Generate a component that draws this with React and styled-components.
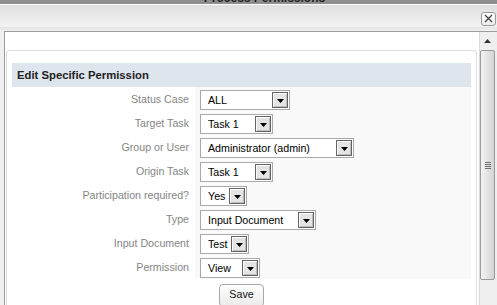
import React from 'react';
import styled, { createGlobalStyle } from 'styled-components';

const GlobalStyle = createGlobalStyle`
  html, body {
    margin: 0;
    padding: 0;
    background: #f0f0f0;
  }
  * {
    box-sizing: border-box;
  }
`;

const Window = styled.div`
  width: 497px;
  height: 305px;
  overflow: hidden;
  display: flex;
  flex-direction: column;
  background: #f0f0f0;
  font-family: "Liberation Sans", Arial, sans-serif;
`;

const TitleStrip = styled.div`
  height: 4px;
  flex: none;
  overflow: hidden;
  display: flex;
  align-items: flex-end;
  justify-content: center;
  padding-left: 32px;
  background: #8e8e8e;
`;

const TitleText = styled.span`
  font-size: 12px;
  font-weight: bold;
  line-height: 11px;
  color: #1e1e1e;
  white-space: nowrap;
`;

const Header = styled.div`
  height: 23px;
  flex: none;
  display: flex;
  align-items: center;
  justify-content: flex-end;
  padding-right: 1px;
  border-top: 1px solid #ffffff;
  background: linear-gradient(#dfdfdf, #f3f3f3);
`;

const CloseButton = styled.div`
  width: 15px;
  height: 14px;
  margin-top: 5px;
  display: flex;
  align-items: center;
  justify-content: center;
  border: 1px solid #9a9a9a;
  border-radius: 3px;
  background: linear-gradient(#ffffff, #ececec);
`;

const Body = styled.div`
  flex: 1;
  display: flex;
  padding: 4px 0 1px 4px;
  background: linear-gradient(#e4e4e4, #f0f0f0 4px);
`;

const Frame = styled.div`
  flex: 1;
  display: flex;
  border: 1px solid #9c9c9c;
  border-right: none;
  background: #ffffff;
  overflow: hidden;
`;

const Viewport = styled.div`
  flex: 1;
  padding: 18px 2px 0 1px;
`;

const Panel = styled.div`
  border: 1px solid #dcdcdc;
  border-bottom: none;
  border-radius: 4px 4px 0 0;
  padding: 12px 5px 0 5px;
  background: #ffffff;
`;

const Form = styled.div`
  display: grid;
  grid-template-columns: 183px 1fr;
  grid-auto-rows: 24px;
`;

const FormTitle = styled.div`
  grid-column: 1 / -1;
  display: flex;
  align-items: center;
  padding-left: 5px;
  background: #dfe5ed;
  font-size: 11.3px;
  font-weight: bold;
  color: #222222;
`;

const Label = styled.div`
  display: flex;
  align-items: center;
  justify-content: flex-end;
  padding-right: 6px;
  font-size: 8pt;
  color: #858585;
  white-space: nowrap;
`;

const Value = styled.div`
  display: flex;
  align-items: flex-start;
  padding: 3px 0 0 5px;
  background: #f9f9f9;
`;

const Select = styled.div`
  width: ${(p) => p.$width}px;
  height: 20px;
  display: flex;
  align-items: center;
  justify-content: space-between;
  padding: 1px;
  padding-left: 7px;
  border: 1px solid #a9a9a9;
  background: #ffffff;
  font-size: 8pt;
  color: #000000;
  white-space: nowrap;
`;

const Arrow = styled.span`
  width: 16px;
  height: 16px;
  flex: none;
  display: flex;
  align-items: center;
  justify-content: center;
  padding-top: 2px;
  border: 1px solid #646464;
  box-shadow: inset 1px 1px 0 #ffffff, inset -1px -1px 0 #bdbdbd;
  background: #e4e4e4;
`;

const Actions = styled.div`
  display: flex;
  justify-content: center;
  padding-top: 5px;
`;

const SaveButton = styled.button`
  width: 45px;
  height: 23px;
  padding: 0 0 3px;
  border: 1px solid #a8a8a8;
  border-radius: 4px;
  background: linear-gradient(#ffffff, #ebebeb);
  font-family: "Liberation Sans", Arial, sans-serif;
  font-size: 8pt;
  color: #111111;
`;

const Scrollbar = styled.div`
  width: 18px;
  flex: none;
  display: flex;
  flex-direction: column;
  border-left: 1px solid #dadada;
  background: #efefef;
`;

const ScrollUp = styled.div`
  height: 18px;
  flex: none;
  display: flex;
  align-items: center;
  justify-content: center;
  padding-right: 2px;
`;

const Thumb = styled.div`
  width: 15px;
  height: 230px;
  display: flex;
  flex-direction: column;
  align-items: center;
  justify-content: center;
  gap: 1px;
  border: 1px solid #9a9a9a;
  border-radius: 2px;
  background: linear-gradient(90deg, #f2f2f2, #d4d4d4);
`;

const Grip = styled.span`
  width: 6px;
  height: 1px;
  background: #6e6e6e;
`;

const fields = [
  { label: 'Status Case', value: 'ALL', width: 90 },
  { label: 'Target Task', value: 'Task 1', width: 73 },
  { label: 'Group or User', value: 'Administrator (admin)', width: 154 },
  { label: 'Origin Task', value: 'Task 1', width: 73 },
  { label: 'Participation required?', value: 'Yes', width: 47 },
  { label: 'Type', value: 'Input Document', width: 116 },
  { label: 'Input Document', value: 'Test', width: 49 },
  { label: 'Permission', value: 'View', width: 60 },
];

const DownTriangle = () => (
  <svg width="7" height="4" viewBox="0 0 7 4">
    <path d="M0 0 L7 0 L3.5 4 Z" fill="#000" />
  </svg>
);

const App = () => {
  return (
    <>
      <GlobalStyle />
      <Window>
        <TitleStrip>
          <TitleText>Process Permissions</TitleText>
        </TitleStrip>
        <Header>
          <CloseButton>
            <svg width="9" height="9" viewBox="0 0 9 9">
              <path d="M1 1 L8 8 M8 1 L1 8" stroke="#444" strokeWidth="1.3" />
            </svg>
          </CloseButton>
        </Header>
        <Body>
          <Frame>
            <Viewport>
              <Panel>
                <Form>
                  <FormTitle>Edit Specific Permission</FormTitle>
                  {fields.map((f) => (
                    <React.Fragment key={f.label}>
                      <Label>{f.label}</Label>
                      <Value>
                        <Select $width={f.width}>
                          {f.value}
                          <Arrow>
                            <DownTriangle />
                          </Arrow>
                        </Select>
                      </Value>
                    </React.Fragment>
                  ))}
                </Form>
                <Actions>
                  <SaveButton>Save</SaveButton>
                </Actions>
              </Panel>
            </Viewport>
            <Scrollbar>
              <ScrollUp>
                <svg width="7" height="4" viewBox="0 0 7 4">
                  <path d="M3.5 0 L7 4 L0 4 Z" fill="#333" />
                </svg>
              </ScrollUp>
              <Thumb>
                <Grip />
                <Grip />
                <Grip />
                <Grip />
              </Thumb>
            </Scrollbar>
          </Frame>
        </Body>
      </Window>
    </>
  );
};

export default App;
